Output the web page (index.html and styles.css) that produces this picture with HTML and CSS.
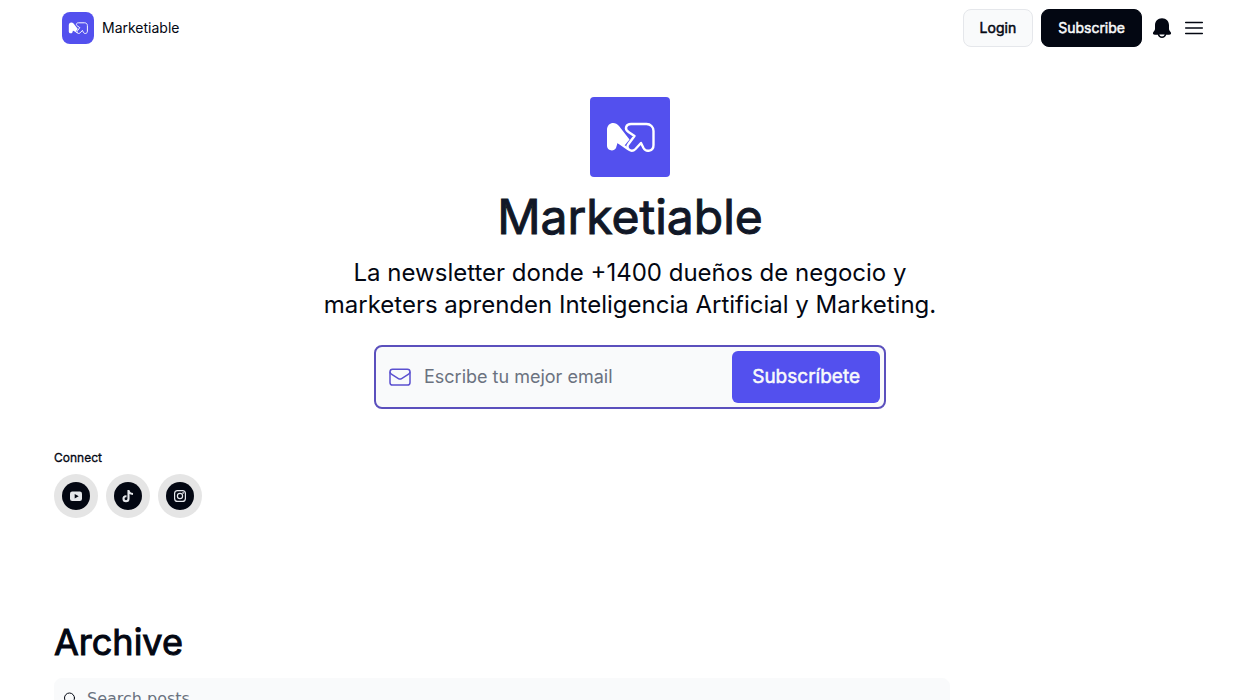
FILE: index.html
```html
<!DOCTYPE html>
<html lang="es">
<head>
<meta charset="utf-8">
<meta name="viewport" content="width=device-width, initial-scale=1">
<title>Marketiable</title>
<link rel="stylesheet" href="styles.css">
</head>
<body>
<svg class="sprite" aria-hidden="true">
  <symbol id="mark" viewBox="0 0 80 80">
    <path fill="currentColor" d="M17 33c0-7.500 8-9 12-4l10.500 13.500-5 6L27.500 46l-1.500 5c-2 4-9 3-9-2.500z"/>
    <path fill="#5350ee" stroke="currentColor" stroke-width="2.400" stroke-linejoin="round" d="M41 27h15.500c4 0 7 3 7 7v14c0 6.500-7.500 7.500-10 3l-2.500-5-5.500 6c-4.500 4.500-10.500-1-7-5l6-8-6-4c-4.500-3-2.500-8 2.500-8z"/>
    <path fill="none" stroke="currentColor" stroke-width="2.400" stroke-linecap="round" d="M28 45l10 7"/>
  </symbol>
</svg>
<header class="topbar">
  <a class="brand" href="#">
    <svg class="brand-logo"><use href="#mark"/></svg>
    <span>Marketiable</span>
  </a>
  <nav class="actions">
    <button class="btn btn-light" type="button">Login</button>
    <button class="btn btn-dark" type="button">Subscribe</button>
    <button class="icon-btn" type="button" aria-label="Notifications">
      <svg width="24" height="24" viewBox="0 0 24 24"><path fill="currentColor" d="M12 2.200c-4.300 0-7 3-7 7v3.500c0 1.500-.8 2.300-1.600 3.400-1.100 1.500-.3 2.700 1.600 2.700h2.800c.4 2 2 3.200 4.200 3.200s3.800-1.200 4.200-3.200H19c1.900 0 2.700-1.200 1.600-2.700-.8-1.100-1.600-1.900-1.600-3.400V9.200c0-4-2.700-7-7-7z"/><path fill="#fff" d="M9.300 18.600h5.400c-.4 1.300-1.400 2-2.700 2s-2.300-.7-2.700-2z"/></svg>
    </button>
    <button class="icon-btn" type="button" aria-label="Menu">
      <svg width="24" height="24" viewBox="0 0 24 24" fill="none" stroke="currentColor" stroke-width="1.500" stroke-linecap="round"><path d="M3.700 6.500h16.600M3.700 12h16.600M3.700 17.500h16.600"/></svg>
    </button>
  </nav>
</header>
<main class="page">
  <section class="hero">
    <svg class="hero-logo"><use href="#mark"/></svg>
    <h1 class="hero-title">Marketiable</h1>
    <p class="hero-text">La newsletter donde +1400 dueños de negocio y marketers aprenden Inteligencia Artificial y Marketing.</p>
    <form class="signup">
      <svg class="mail" viewBox="0 0 24 24" fill="none" stroke="currentColor" stroke-width="1.500" stroke-linecap="round" stroke-linejoin="round"><rect x="2" y="4.200" width="20" height="15.800" rx="2.600"/><path d="M2.200 7.200c0 .9.400 1.500 1.200 2l7 4.400c1 .6 2.200.6 3.200 0l7-4.400c.8-.5 1.200-1.100 1.200-2"/></svg>
      <input class="email" type="email" aria-label="Email" placeholder="Escribe tu mejor email">
      <button class="join" type="submit">Subscríbete</button>
    </form>
  </section>
  <section class="connect">
    <h2 class="connect-title">Connect</h2>
    <div class="socials">
      <a class="social" href="#" aria-label="YouTube"><svg viewBox="0 0 28 28"><rect x="8" y="9.500" width="12" height="9.500" rx="2.200" fill="currentColor"/><path fill="#030712" d="M12.700 12l4 2.200-4 2.200z"/></svg></a>
      <a class="social" href="#" aria-label="TikTok"><svg viewBox="0 0 28 28" fill="none" stroke="currentColor" stroke-width="2.100"><path d="M14.500 8v8.700a2.500 2.500 0 1 1-2.500-2.500h.5M14.500 8c.2 2.300 1.700 3.800 4.500 4"/></svg></a>
      <a class="social" href="#" aria-label="Instagram"><svg viewBox="0 0 28 28" fill="none" stroke="currentColor" stroke-width="1.200"><rect x="8.600" y="8.600" width="10.800" height="10.800" rx="3"/><circle cx="14" cy="14" r="2.600"/><circle cx="17.200" cy="10.900" r=".3"/></svg></a>
    </div>
  </section>
  <section class="archive">
    <h2 class="archive-title">Archive</h2>
    <label class="search">
      <svg width="16" height="16" viewBox="0 0 16 16" fill="none" stroke="currentColor" stroke-linecap="round"><circle cx="6.500" cy="7" r="5"/><path d="M10 10.600L14 14"/></svg>
      <input class="search-input" type="search" aria-label="Search posts" placeholder="Search posts">
    </label>
  </section>
</main>
</body>
</html>
```
FILE: styles.css
```css
* { box-sizing: border-box; }
body { margin: 0; background: #fff; color: #030712; font-family: Inter, "Liberation Sans", sans-serif; }
button, input { font: inherit; color: inherit; }
button { cursor: pointer; }
h1, h2, p { margin: 0; font-weight: 400; }
svg { display: block; }
.sprite { position: absolute; width: 0; height: 0; }
.topbar { display: flex; justify-content: space-between; align-items: center; height: 56px; padding: 0 54px 0 62px; }
.brand { display: flex; align-items: center; gap: 8px; color: inherit; text-decoration: none; font-size: 14px; line-height: 20px; }
.brand-logo { width: 32px; height: 32px; border-radius: 8px; background: #5350ee; color: #fff; }
.actions { display: flex; align-items: center; gap: 8px; }
.btn { height: 38px; padding: 0 16px; border: 1px solid #030712; border-radius: 8px; font-size: 14px; line-height: 20px; -webkit-text-stroke: 0.5px; }
.btn-light { background: #f9fafb; border-color: #e5e7eb; }
.btn-dark { background: #030712; color: #f9fafb; }
.icon-btn { padding: 0; border: 0; background: none; }
.page { padding: 0 54px; }
.hero { display: flex; flex-direction: column; align-items: center; padding-top: 41px; }
.hero-logo { width: 80px; height: 80px; border-radius: 4px; background: #5350ee; color: #fff; }
.hero-title { margin-top: 16px; font-size: 48px; line-height: 48px; color: #111827; -webkit-text-stroke: 1px; }
.hero-text { max-width: 672px; margin-top: 16px; font-size: 24px; line-height: 32px; text-align: center; }
.signup { display: flex; align-items: center; width: 100%; max-width: 512px; margin-top: 24px; padding: 4px; border: 2px solid #5b50bd; border-radius: 8px; background: #f9fafb; }
.mail { flex: none; width: 24px; height: 24px; margin: 0 12px 0 8px; color: #5b50d0; }
.email { flex: 1; min-width: 0; padding: 0; border: 0; outline: 0; background: none; font-size: 18px; line-height: 28px; }
.email::placeholder { color: #6b7280; }
.join { height: 52px; padding: 0 20px; border: 0; border-radius: 6px; background: #5350ee; color: #f9fafb; font-size: 19px; line-height: 28px; -webkit-text-stroke: 0.5px; }
.connect { margin-top: 41px; }
.connect-title { font-size: 12px; line-height: 16px; -webkit-text-stroke: 0.3px; }
.socials { display: flex; gap: 8px; margin-top: 8px; }
.social { padding: 8px; border-radius: 50%; background: #e5e5e5; color: #e5e7eb; }
.social svg { width: 28px; height: 28px; border-radius: 50%; background: #030712; }
.archive { margin-top: 104px; padding-bottom: 48px; }
.archive-title { font-size: 36px; line-height: 40px; -webkit-text-stroke: 1px; }
.search { display: flex; align-items: center; gap: 8px; max-width: 896px; height: 42px; margin-top: 16px; padding: 0 8px; border: 1px solid #f9fafb; border-radius: 8px; background: #f9fafb; }
.search-input { flex: 1; min-width: 0; padding: 0; border: 0; outline: 0; background: none; font-family: "DejaVu Sans", sans-serif; font-size: 16px; line-height: 24px; }
.search-input::placeholder { color: #6b7280; }
```
